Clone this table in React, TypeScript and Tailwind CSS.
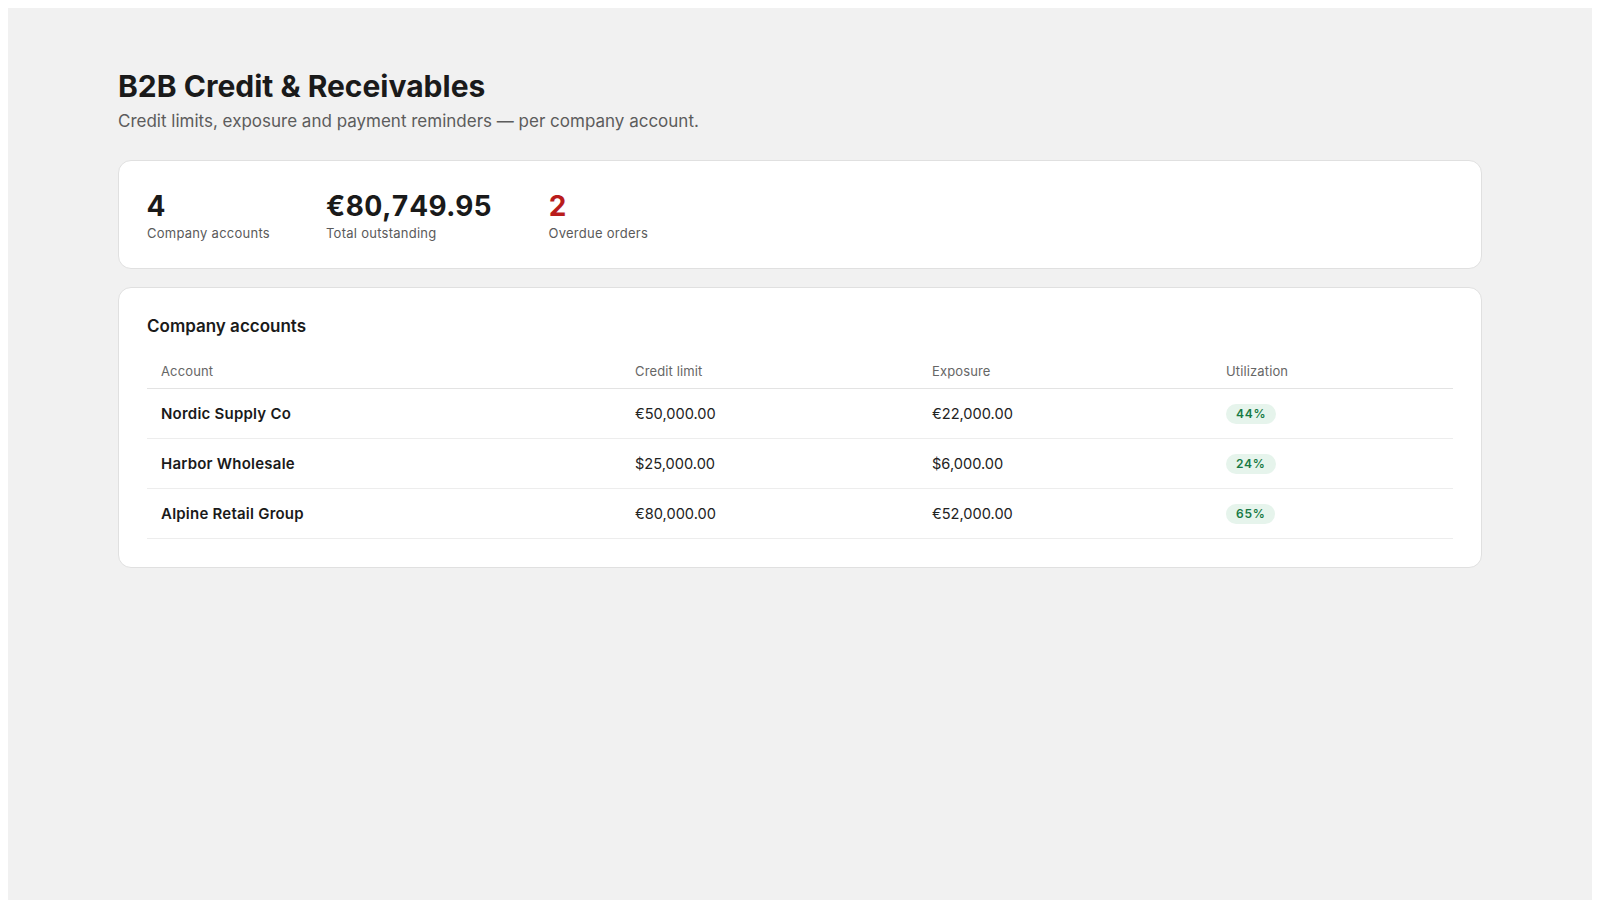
import React from "react";

const font = { fontFamily: "Inter, 'Noto Sans', sans-serif" };

const rows = [
  { name: "Nordic Supply Co", limit: "€50,000.00", exposure: "€22,000.00", util: "44%" },
  { name: "Harbor Wholesale", limit: "$25,000.00", exposure: "$6,000.00", util: "24%" },
  { name: "Alpine Retail Group", limit: "€80,000.00", exposure: "€52,000.00", util: "65%" },
];

export default function App() {
  return (
    <div className="bg-white px-2 pt-2" style={font}>
      <div className="h-[892px] bg-[#f1f1f1] pt-[60px]">
        <div className="mx-auto w-[1364px]">
          <h1 className="text-[30px] font-bold leading-9 text-[#1a1a1a]">
            B2B Credit &amp; Receivables
          </h1>
          <p className="mt-[5px] text-[17px] leading-6 text-[#5c5c5c]">
            Credit limits, exposure and payment reminders — per company account.
          </p>

          <div className="mt-[27px] flex flex-col gap-[18px]">
            <div className="rounded-[13px] border border-[#e0e0e0] bg-white px-7 pt-[29px] pb-[27px]">
              <div className="flex gap-14">
                <div>
                  <div className="text-[28px] font-bold leading-[33.6px] tabular-nums tracking-[0.02em] text-[#1a1a1a]">4</div>
                  <div className="mt-px text-[13px] leading-4 tracking-[0.02em] text-[#5a5a5a]">Company accounts</div>
                </div>
                <div>
                  <div className="text-[28px] font-bold leading-[33.6px] tabular-nums tracking-[0.02em] text-[#1a1a1a]">€80,749.95</div>
                  <div className="mt-px text-[13px] leading-4 tracking-[0.02em] text-[#5a5a5a]">Total outstanding</div>
                </div>
                <div>
                  <div className="text-[28px] font-bold leading-[33.6px] tabular-nums tracking-[0.02em] text-[#b91c1c]">2</div>
                  <div className="mt-px text-[13px] leading-4 tracking-[0.02em] text-[#5a5a5a]">Overdue orders</div>
                </div>
              </div>
            </div>

            <div className="rounded-[13px] border border-[#e0e0e0] bg-white px-7 pt-7 pb-7">
              <h2 className="mb-[14px] text-[17px] font-semibold leading-5 text-[#1a1a1a]">
                Company accounts
              </h2>
              <table className="w-full table-fixed border-collapse text-left">
                <colgroup>
                  <col className="w-[474px]" />
                  <col className="w-[297px]" />
                  <col className="w-[294px]" />
                  <col />
                </colgroup>
                <thead>
                  <tr className="border-b border-[#e3e3e3]">
                    <th className="px-3.5 pt-3 pb-2 text-[13px] font-normal leading-[18px] tracking-[0.01em] text-[#666666]">Account</th>
                    <th className="px-3.5 pt-3 pb-2 text-[13px] font-normal leading-[18px] tracking-[0.01em] text-[#666666]">Credit limit</th>
                    <th className="px-3.5 pt-3 pb-2 text-[13px] font-normal leading-[18px] tracking-[0.01em] text-[#666666]">Exposure</th>
                    <th className="px-3.5 pt-3 pb-2 text-[13px] font-normal leading-[18px] tracking-[0.01em] text-[#666666]">Utilization</th>
                  </tr>
                </thead>
                <tbody>
                  {rows.map((r) => (
                    <tr key={r.name} className="border-b border-[#ededed]">
                      <td className="px-3.5 py-[13px] text-[15px] font-semibold leading-[23px] tracking-[0.015em] text-[#1a1a1a]">{r.name}</td>
                      <td className="px-3.5 pt-[14px] pb-[12px] text-[14.6px] leading-[23px] text-[#222222]">{r.limit}</td>
                      <td className="px-3.5 pt-[14px] pb-[12px] text-[14.6px] leading-[23px] text-[#222222]">{r.exposure}</td>
                      <td className="px-3.5 py-[13px] leading-[23px]">
                        <span className="inline-block rounded-full bg-[#e6f4ec] px-2.5 py-[2px] align-middle text-[12px] font-semibold leading-4 tracking-[0.06em] text-[#187a45]">
                          {r.util}
                        </span>
                      </td>
                    </tr>
                  ))}
                </tbody>
              </table>
            </div>
          </div>
        </div>
      </div>
    </div>
  );
}
